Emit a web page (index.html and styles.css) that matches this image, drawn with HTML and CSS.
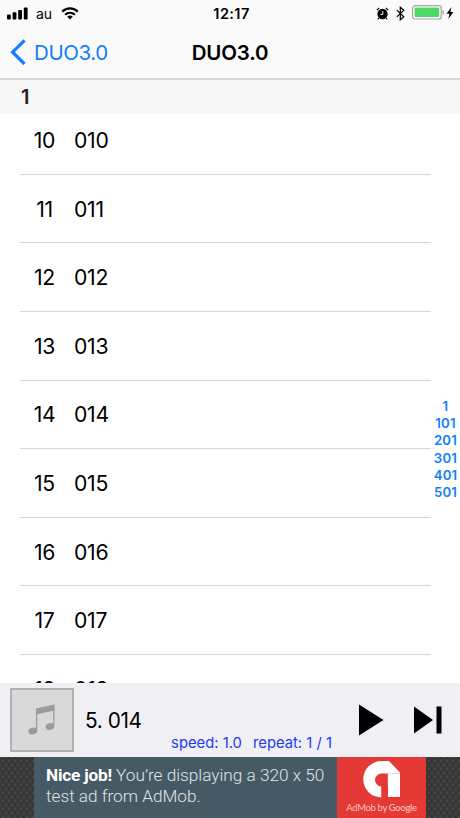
FILE: index.html
```html
<!DOCTYPE html>
<html lang="en">
<head>
  <meta charset="UTF-8" />
  <meta name="viewport" content="width=device-width, initial-scale=1.0"/>
  <title>DUO3.0</title>
  <link rel="stylesheet" href="styles.css">
</head>
<body>

  <div class="top">
    <div class="status-bar">
      <div class="status-left">
        <svg class="signal" width="21" height="13" viewBox="0 0 21 13">
          <rect x="0" y="7.5" width="3.8" height="5" rx="1"/>
          <rect x="5.6" y="5.3" width="3.8" height="7.2" rx="1"/>
          <rect x="11.2" y="3" width="3.8" height="9.5" rx="1"/>
          <rect x="16.8" y="0.5" width="3.8" height="12" rx="1"/>
        </svg>
        <span class="carrier">au</span>
        <svg class="wifi" width="18" height="13" viewBox="0 0 18 13">
          <path d="M1.2 4.6a11 11 0 0 1 15.6 0" fill="none" stroke="#000" stroke-width="2.3"/>
          <path d="M4.1 7.7a7 7 0 0 1 9.8 0" fill="none" stroke="#000" stroke-width="2.1"/>
          <path d="M9 12.6L6.2 9.8a4 4 0 0 1 5.6 0z"/>
        </svg>
      </div>
      <div class="clock">12:17</div>
      <div class="status-right">
        <svg class="alarm" width="13" height="13" viewBox="0 0 13 13">
          <circle cx="6.5" cy="7" r="5.2"/>
          <path d="M.7 3.2L3.2 1M12.3 3.2L9.8 1M2.8 11.2l-1 1.2M10.2 11.2l1 1.2" stroke="#000" stroke-width="1.1"/>
          <path d="M6.8 4v3.4H4.4" fill="none" stroke="#fff" stroke-width="1"/>
        </svg>
        <svg class="bluetooth" width="9" height="15" viewBox="0 0 9 15">
          <path d="M.8 4.1l7 6.6-3.5 3.1V1.2l3.5 3.1-7 6.6" fill="none" stroke="#000" stroke-width="1.2"/>
        </svg>
        <svg class="battery" width="33" height="15" viewBox="0 0 33 15">
          <rect x=".6" y=".6" width="28.6" height="13.4" rx="2.6" fill="#fff" stroke="#a3a5a3" stroke-width="1.2"/>
          <rect x="2.6" y="2.6" width="24.6" height="9.4" rx="1" fill="#4cd964"/>
          <path d="M30.5 5v5q1.5-.8 1.5-2.5T30.5 5z" fill="#a3a5a3"/>
        </svg>
        <svg class="bolt" width="8" height="12" viewBox="0 0 8 12">
          <path d="M5.5 0L.5 6.8h3L2.4 12l5-7.1h-3z"/>
        </svg>
      </div>
    </div>
    <div class="nav-bar">
      <a class="back">
        <svg width="16" height="27" viewBox="0 0 16 27">
          <path d="M14.5 1.4L2.6 13.200l11.900 11.800" fill="none" stroke="#147efb" stroke-width="3.2"/>
        </svg>
        <span>DUO3.0</span>
      </a>
      <h1>DUO3.0</h1>
    </div>
  </div>

  <div class="content">
    <h2>1</h2>
    <div class="list">
      <div class="row"><span class="num">10</span><span>010</span></div>
      <div class="row"><span class="num">11</span><span>011</span></div>
      <div class="row"><span class="num">12</span><span>012</span></div>
      <div class="row"><span class="num">13</span><span>013</span></div>
      <div class="row"><span class="num">14</span><span>014</span></div>
      <div class="row"><span class="num">15</span><span>015</span></div>
      <div class="row"><span class="num">16</span><span>016</span></div>
      <div class="row"><span class="num">17</span><span>017</span></div>
      <div class="row"><span class="num">18</span><span>018</span></div>
    </div>
    <div class="index">
      <span>1</span>
      <span>101</span>
      <span>201</span>
      <span>301</span>
      <span>401</span>
      <span>501</span>
    </div>
  </div>

  <div class="player">
    <div class="artwork">
      <svg width="28" height="32" viewBox="0 0 28 32">
        <path d="M8 4.6L26.4.6v6L8 10.400z"/>
        <path d="M8.600 5v21M25.800 2v20" fill="none" stroke="#9b9b9d" stroke-width="1.300"/>
        <ellipse cx="4.800" cy="27" rx="4.500" ry="3.400" transform="rotate(-15 4.800 27)"/>
        <ellipse cx="22" cy="22.500" rx="4.500" ry="3.400" transform="rotate(-15 22 22.500)"/>
      </svg>
    </div>
    <div class="track">5. 014</div>
    <div class="settings"><span>speed: 1.0</span><span>repeat: 1 / 1</span></div>
    <div class="controls">
      <svg width="25" height="32" viewBox="0 0 25 32"><path d="M0 .5L24.500 16 0 31.500z"/></svg>
      <svg width="28" height="28" viewBox="0 0 28 28"><path d="M0 .5L19 14 0 27.500zM22.500 .5H27.500v27H22.500z"/></svg>
    </div>
  </div>

  <div class="ad">
    <div class="ad-text"><b>Nice job!</b> You’re displaying a 320 x 50<br>test ad from AdMob.</div>
    <div class="ad-logo">
      <svg width="38" height="37" viewBox="0 0 38 37">
        <path d="M18.500 36.500A18.200 18.200 0 0 1 18.500 0H26L37 11.500V36H24.800V25.500H18.500V36.500z" fill="#fff"/>
        <path d="M24.800 36.500V12.500H18.500a6.500 6.500 0 0 0 0 13V36.500z" fill="#e53935"/>
        <path d="M25 12.500h11.500" stroke="#f3c5c3" stroke-width=".8"/>
      </svg>
      <div class="ad-by">AdMob by <b>Google</b></div>
    </div>
  </div>

</body>
</html>
```

FILE: styles.css
```css
* {
  box-sizing: border-box;
  margin: 0;
  padding: 0;
}

body {
  display: flex;
  flex-direction: column;
  height: 818px;
  overflow: hidden;
  font-family: Inter, 'Liberation Sans', sans-serif;
  background-color: #fff;
  color: #000;
  white-space: nowrap;
}

svg {
  display: block;
  flex: none;
}

.top {
  height: 80px;
  flex: none;
  background-color: #fafafa;
  border-bottom: 2px solid #d9d9da;
}

.status-bar, .nav-bar {
  display: grid;
  grid-template-columns: 1fr auto 1fr;
  align-items: center;
}

.status-bar {
  height: 26px;
  padding: 0 6px 0 7px;
}

.status-left, .status-right {
  display: flex;
  align-items: center;
}

.status-right {
  justify-content: flex-end;
}

.carrier {
  margin: 0 9px 0 8px;
  font-size: 14px;
}

.clock {
  padding-left: 2px;
  font-size: 14.5px;
  font-weight: 600;
  letter-spacing: 0.4px;
}

.bluetooth {
  margin: 0 7px;
}

.battery {
  margin-top: -1px;
}

.bolt {
  margin-left: 1px;
}

.nav-bar {
  height: 52px;
  padding: 0 10px;
}

.back {
  display: flex;
  align-items: center;
  gap: 8px;
  color: #147efb;
  font-size: 20.5px;
  letter-spacing: -0.4px;
}

h1 {
  font-size: 20.5px;
  font-weight: 600;
  letter-spacing: -0.2px;
}

.content {
  position: relative;
  flex: none;
  height: 603px;
  overflow: hidden;
}

h2 {
  position: relative;
  height: 34px;
  padding-left: 21px;
  background-color: #f7f7f7;
  color: #222;
  font-size: 20px;
  font-weight: 600;
  line-height: 34px;
}

.list {
  margin: -7.800px 29px 0 20px;
}

.row {
  display: flex;
  align-items: center;
  height: 68.600px;
  border-bottom: 1px solid #d5d5d7;
  font-size: 21.200px;
  letter-spacing: -0.3px;
}

.num {
  width: 49px;
  margin-right: 5px;
  text-align: center;
}

.index {
  position: absolute;
  top: 318px;
  right: 2px;
  width: 25px;
  display: flex;
  flex-direction: column;
  align-items: center;
  color: #147efb;
  font-size: 13.200px;
  font-weight: 600;
  letter-spacing: 0.2px;
  line-height: 17.200px;
}

.player {
  display: grid;
  grid-template-columns: 64px 1fr auto;
  grid-template-rows: 64px;
  align-content: center;
  align-items: center;
  column-gap: 11px;
  height: 74px;
  flex: none;
  padding: 0 18px 0 10px;
  position: relative;
  background-color: #efeff4;
}

.artwork {
  display: flex;
  align-items: center;
  justify-content: center;
  height: 64px;
  border: 2px solid #b1b1b3;
  background-color: #d9d9d9;
  fill: #9b9b9d;
}

.track {
  font-size: 20.800px;
  letter-spacing: -0.4px;
}

.settings {
  position: absolute;
  right: 128px;
  bottom: 5px;
  display: flex;
  gap: 11px;
  color: #1f3df0;
  font-size: 14.800px;
}

.controls {
  display: flex;
  align-items: center;
  gap: 30px;
}

.ad {
  display: flex;
  justify-content: center;
  height: 61px;
  flex: none;
  background-color: #363636;
  background-image: radial-gradient(circle, #444 1px, transparent 2px), radial-gradient(circle, #444 1px, transparent 2px);
  background-size: 6px 8px;
  background-position: 0 0, 3px 4px;
}

.ad-text {
  width: 303px;
  padding: 8px 0 0 12px;
  background-color: #455a64;
  color: #e0e5e8;
  font-family: Roboto, sans-serif;
  font-size: 17.200px;
  font-weight: 300;
  line-height: 20.500px;
}

.ad-text b {
  color: #fff;
  font-weight: 700;
  letter-spacing: -0.2px;
}

.ad-logo {
  display: flex;
  flex-direction: column;
  align-items: center;
  width: 89px;
  padding-top: 4px;
  background-color: #e53935;
}

.ad-by {
  margin-top: 4px;
  color: #f9c3c1;
  font-family: Lato, sans-serif;
  font-size: 9.500px;
  letter-spacing: -0.350px;
  line-height: 12px;
}

.ad-by b {
  font-weight: 500;
}
```
